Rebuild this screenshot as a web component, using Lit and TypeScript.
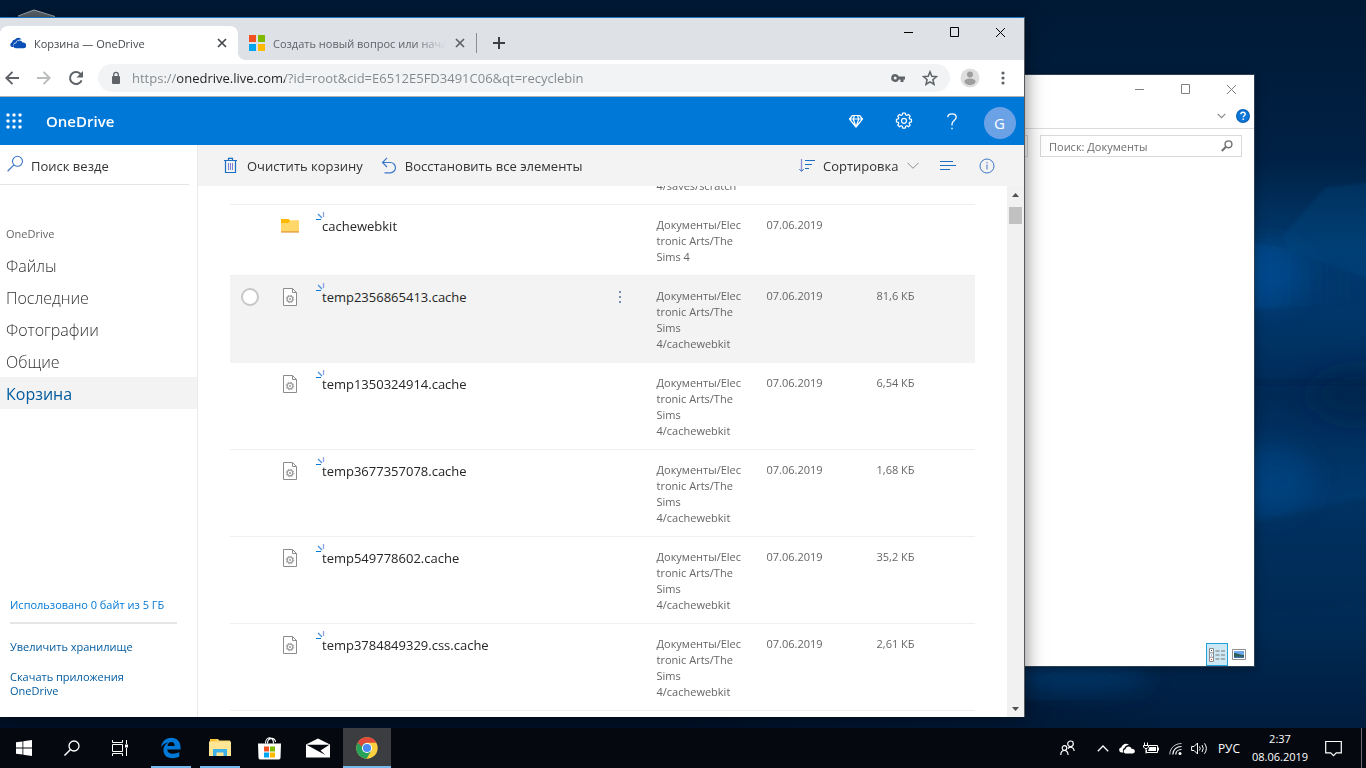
import { LitElement, html, svg, css, nothing } from "lit";
import { customElement } from "lit/decorators.js";
import { classMap } from "lit/directives/class-map.js";

const base = css`
  * { box-sizing: border-box; }
  button {
    font: inherit; color: inherit; background: none; border: 0; padding: 0; margin: 0;
    display: flex; align-items: center; justify-content: center;
  }
  input { font: inherit; margin: 0; padding: 0; border: 0; outline: 0; background: none; min-width: 0; }
  a { text-decoration: none; color: inherit; }
  svg { display: block; flex: none; }
  h1, h2, p, ul { margin: 0; padding: 0; font: inherit; list-style: none; }
`;

const icons = {
  minimize: html`<svg width="11" height="11" viewBox="0 0 11 11"><path d="M1 5.5h9" stroke="currentColor" fill="none"/></svg>`,
  maximize: html`<svg width="11" height="11" viewBox="0 0 11 11"><path d="M1.5.5h8v9h-8z" stroke="currentColor" fill="none"/></svg>`,
  close: html`<svg width="11" height="11" viewBox="0 0 11 11"><path d="M1 1l9 9M10 1l-9 9" stroke="currentColor" fill="none"/></svg>`,
};

/* ---------- Window caption buttons ---------- */
@customElement("caption-buttons")
class CaptionButtons extends LitElement {
  static styles = [base, css`
    :host { display: flex; height: 29px; }
    button { width: 46px; height: 29px; }
  `];
  render() {
    return html`
      <button aria-label="Свернуть">${icons.minimize}</button>
      <button aria-label="Развернуть">${icons.maximize}</button>
      <button aria-label="Закрыть">${icons.close}</button>`;
  }
}

/* ---------- Browser tabs and toolbar ---------- */
@customElement("browser-chrome")
class BrowserChrome extends LitElement {
  static styles = [base, css`
    :host { display: block; flex: none; color: #5f6368; }
    .strip { display: flex; height: 42px; background: #dee1e6; align-items: flex-start; }
    .tabs { display: flex; flex: 1; min-width: 0; padding-top: 8px; }
    .tab {
      display: flex; align-items: center; width: 238px; height: 34px;
      padding: 0 8px 0 10px; color: #5f6368; position: relative; font-size: 11px;
    }
    .tab.active { background: #fff; border-radius: 8px 8px 0 0; color: #45494d; }
    .tab.active::after {
      content: ""; position: absolute; left: 100%; bottom: 0; width: 8px; height: 8px;
      background: radial-gradient(circle at 100% 0, transparent 8px, #fff 8px);
    }
    .tab.rest { border: 0; padding-left: 11px; }
    .title {
      flex: 1; margin-left: 8px; overflow: hidden; white-space: nowrap;
    }
    .rest .title { mask-image: linear-gradient(to right, #000 82%, transparent 100%); }
    .x { width: 16px; height: 16px; }
    .rest .x { margin-left: 6px; }
    .sep { width: 1px; height: 20px; background: #8a8d92; margin-top: 7px; }
    .plus { width: 28px; height: 34px; margin-left: 8px; color: #3c4043; }
    caption-buttons { color: #000; }
    .bar {
      display: flex; align-items: center; height: 37px; background: #fff;
      border-bottom: 1px solid #b1b1b3;
    }
    .nav { display: flex; margin-left: -4px; }
    .nav button { width: 32px; height: 32px; }
    .dim { color: #babcbe; }
    .omni {
      flex: 1; display: flex; align-items: center; height: 28px; margin-left: 6px;
      background: #f1f3f4; border-radius: 14px; padding: 0 4px 0 10px;
    }
    .omni input {
      flex: 1; height: 28px; margin-left: 8px; font-size: 13px;
      background-image: linear-gradient(to right, #80868b 45px, #202124 45px, #202124 153px, #80868b 153px);
      -webkit-background-clip: text; background-clip: text; color: transparent;
    }
    .omni button { width: 32px; height: 28px; }
    .profile { width: 40px; height: 32px; }
    .menu { width: 26px; height: 32px; margin-right: 8px; }
  `];
  render() {
    const x = html`<svg width="16" height="16" viewBox="0 0 16 16"><path d="M4 4l8 8M12 4l-8 8" stroke="currentColor" stroke-width="1.7"/></svg>`;
    return html`
      <div class="strip">
        <div class="tabs" role="tablist">
          <div class="tab active" role="tab">
            <svg width="16" height="16" viewBox="0 0 16 16">
              <path d="M1.8 12A2.6 2.6 0 0 1 2 7.200A3.400 3.400 0 0 1 5 4.400A4 4 0 0 1 11.600 4.500C8.500 4 6.500 5.500 5.800 7.400C3.600 7.600 2.800 10 4 12z" fill="#0a4fb5"/>
              <path d="M6 13.300A2.500 2.500 0 0 1 6 8.300A3.500 3.500 0 0 1 12.600 7.600A2.900 2.900 0 0 1 14 13.300z" fill="#0a4fb5"/>
            </svg>
            <span class="title">Корзина — OneDrive</span>
            <button class="x" aria-label="Закрыть вкладку">${x}</button>
          </div>
          <div class="tab rest" role="tab">
            <svg width="16" height="16" viewBox="0 0 16 16">
              <path fill="#f25022" d="M0 0h7v7H0z"/><path fill="#7fba00" d="M9 0h7v7H9z"/>
              <path fill="#00a4ef" d="M0 9h7v7H0z"/><path fill="#ffb900" d="M9 9h7v7H9z"/>
            </svg>
            <span class="title">Создать новый вопрос или нача</span>
            <button class="x" aria-label="Закрыть вкладку">${x}</button>
          </div>
          <span class="sep"></span>
          <button class="plus" aria-label="Новая вкладка">
            <svg width="14" height="14" viewBox="0 0 14 14"><path d="M7 1v12M1 7h12" stroke="currentColor" stroke-width="2"/></svg>
          </button>
        </div>
        <caption-buttons></caption-buttons>
      </div>
      <div class="bar">
        <div class="nav">
          <button aria-label="Назад"><svg width="16" height="16" viewBox="0 0 16 16"><path d="M15 8H2.500M8.500 1.800L2.300 8l6.200 6.200" stroke="currentColor" stroke-width="1.900" fill="none"/></svg></button>
          <button class="dim" aria-label="Вперед"><svg width="16" height="16" viewBox="0 0 16 16"><path d="M1 8h12.500M7.500 1.800L13.700 8l-6.200 6.200" stroke="currentColor" stroke-width="1.900" fill="none"/></svg></button>
          <button aria-label="Обновить"><svg width="16" height="16" viewBox="0 0 16 16"><path d="M13.600 10.300A6 6 0 1 1 12.300 3.800L14 5.500" stroke="currentColor" stroke-width="2" fill="none"/><path d="M15 1v6.500H8.500z" fill="currentColor"/></svg></button>
        </div>
        <div class="omni">
          <svg width="16" height="16" viewBox="0 0 16 16"><path d="M5 6h6a1 1 0 0 1 1 1v6a1 1 0 0 1-1 1H5a1 1 0 0 1-1-1V7a1 1 0 0 1 1-1z" fill="#5f6368"/><path d="M5.700 7V4.600a2.300 2.300 0 0 1 4.600 0V7" stroke="#5f6368" stroke-width="1.300" fill="none"/></svg>
          <input aria-label="Адрес" .value=${"https://onedrive.live.com/?id=root&cid=E6512E5FD3491C06&qt=recyclebin"} />
          <button aria-label="Пароли"><svg width="14" height="14" viewBox="0 0 14 14"><path fill-rule="evenodd" fill="currentColor" d="M4.200 3a4 4 0 1 0 3.700 5.500H9.500V11h3V8.500H14v-3H7.900A4 4 0 0 0 4.200 3zm0 2.500a1.500 1.500 0 1 1 0 3a1.500 1.500 0 0 1 0-3z"/></svg></button>
          <button aria-label="Добавить закладку"><svg width="16" height="16" viewBox="0 0 16 16"><path d="M8 1.800l1.800 4.400 4.700.4-3.600 3.100 1.100 4.600L8 11.800l-4 2.500 1.100-4.600L1.500 6.600l4.700-.4z" stroke="currentColor" stroke-width="1.500" fill="none"/></svg></button>
        </div>
        <button class="profile" aria-label="Профиль"><svg width="20" height="20" viewBox="0 0 20 20"><circle cx="10" cy="10" r="9.500" fill="#dedede"/><circle cx="10" cy="6.500" r="3" fill="#9e9e9e"/><path d="M4.500 13.500c0-2 3-3 5.500-3s5.500 1 5.500 3c0 2-3 3.500-5.500 3.500s-5.500-1.500-5.500-3.500z" fill="#9e9e9e"/></svg></button>
        <button class="menu" aria-label="Меню"><svg width="4" height="14" viewBox="0 0 4 14"><g fill="currentColor"><circle cx="2" cy="2" r="1.600"/><circle cx="2" cy="7" r="1.600"/><circle cx="2" cy="12" r="1.600"/></g></svg></button>
      </div>`;
  }
}

/* ---------- File table ---------- */
interface Item { name: string; path: string; date: string; size: string; kind: "folder" | "file"; hovered?: boolean; }

const cachePath = "Документы/Electronic Arts/The Sims 4/cachewebkit";
const items: Item[] = [
  { name: "cachewebkit", path: "Документы/Electronic Arts/The Sims 4", date: "07.06.2019", size: "", kind: "folder" },
  { name: "temp2356865413.cache", path: cachePath, date: "07.06.2019", size: "81,6 КБ", kind: "file", hovered: true },
  { name: "temp1350324914.cache", path: cachePath, date: "07.06.2019", size: "6,54 КБ", kind: "file" },
  { name: "temp3677357078.cache", path: cachePath, date: "07.06.2019", size: "1,68 КБ", kind: "file" },
  { name: "temp549778602.cache", path: cachePath, date: "07.06.2019", size: "35,2 КБ", kind: "file" },
  { name: "temp3784849329.css.cache", path: cachePath, date: "07.06.2019", size: "2,61 КБ", kind: "file" },
];

@customElement("file-list")
class FileList extends LitElement {
  static styles = [base, css`
    :host { display: flex; flex: 1; min-height: 0; background: #fff; }
    .view { flex: 1; min-width: 0; overflow: hidden; padding: 0 32px 24px; }
    table { width: 100%; table-layout: fixed; border-collapse: collapse; font-size: 11px; line-height: 16px; color: #666; }
    td { vertical-align: top; padding: 12px 0 10px; border-bottom: 1px solid #efefef; text-align: left; }
    tr.lead td { padding-top: 0; }
    tr.hovered td { background: #f3f3f3; border-bottom-color: #f3f3f3; }
    .check, .icon, .more { width: 40px; }
    .path, .date { width: 110px; }
    .size { width: 115px; }
    td.path { padding-left: 17px; padding-right: 8px; overflow-wrap: anywhere; }
    td.date, td.size { padding-left: 17px; }
    td.name { padding: 11px 0 10px 12px; font-size: 13px; line-height: 20px; color: #262626; position: relative; }
    td.name svg { position: absolute; left: 6px; top: 7px; }
    td svg, td input { margin: 0 auto; }
    input {
      appearance: none; display: block; width: 18px; height: 18px; border-radius: 50%;
      border: 2px solid #c8c8c8; background: #fff;
    }
    .more button { width: 40px; height: 18px; color: #0078d7; }
    .scroll { width: 17px; background: #f1f1f1; display: flex; flex-direction: column; align-items: center; }
    .scroll button { width: 17px; height: 17px; color: #505050; }
    .track { flex: 1; width: 13px; padding-top: 4px; }
    .thumb { height: 17px; background: #c1c1c1; }
  `];
  firstUpdated() {
    this.renderRoot.querySelector(".view")!.scrollTop = 8;
  }
  private glyph(kind: string) {
    return kind === "folder"
      ? html`<svg width="18" height="18" viewBox="0 0 18 18"><path d="M0 2h7.500l1.200 1.200H18V15H0z" fill="#ffd869"/><path d="M0 2h7.500l1.500 1.500L7.500 6H0z" fill="#ffb900"/><path d="M0 14.500h18v1H0z" fill="#d9831f"/></svg>`
      : html`<svg width="18" height="18" viewBox="0 0 18 18"><path d="M2.500.5h9l4 4v13h-13z" fill="#fff" stroke="#8c8c8c"/><path d="M11.500.5v4h4" fill="none" stroke="#8c8c8c"/><g fill="none" stroke="#a0a0a0"><circle cx="9" cy="11" r="2.800" stroke-width="1.300"/><circle cx="9" cy="11" r="3.800" stroke-dasharray="1.500 1.480"/></g><circle cx="9" cy="11" r=".9" fill="#8c8c8c"/></svg>`;
  }
  render() {
    return html`
      <div class="view">
        <table aria-label="Корзина">
          <colgroup><col class="check"><col class="icon"><col><col class="more"><col class="path"><col class="date"><col class="size"></colgroup>
          <tbody>
            <tr class="lead"><td></td><td></td><td></td><td></td><td class="path">4/saves/scratch</td><td></td><td></td></tr>
            ${items.map(i => html`
              <tr class=${classMap({ hovered: !!i.hovered })}>
                <td>${i.hovered ? html`<input type="checkbox" aria-label=${i.name}>` : nothing}</td>
                <td>${this.glyph(i.kind)}</td>
                <td class="name"><svg width="9" height="9" viewBox="0 0 9 9"><path d="M0 7.500h5" stroke="#0078d7"/><path d="M2 2l4 4" stroke="#4b93dc" stroke-width="1.200"/><path d="M7.500 0v5" stroke="#8fa0e4" stroke-width="1.300"/></svg><a href="#">${i.name}</a></td>
                <td class="more">${i.hovered ? html`<button aria-label="Действия"><svg width="2" height="14" viewBox="0 0 2 14"><path d="M0 1h2v2H0zM0 6h2v2H0zM0 11h2v2H0z" fill="#7a8fae"/></svg></button>` : nothing}</td>
                <td class="path">${i.path}</td>
                <td class="date">${i.date}</td>
                <td class="size">${i.size}</td>
              </tr>`)}
          </tbody>
        </table>
      </div>
      <div class="scroll">
        <button aria-label="Вверх"><svg width="7" height="4" viewBox="0 0 7 4"><path d="M0 4L3.500 0 7 4z" fill="currentColor"/></svg></button>
        <div class="track"><div class="thumb"></div></div>
        <button aria-label="Вниз"><svg width="7" height="4" viewBox="0 0 7 4"><path d="M0 0l3.500 4L7 0z" fill="currentColor"/></svg></button>
      </div>`;
  }
}

/* ---------- OneDrive page ---------- */
@customElement("onedrive-page")
class OnedrivePage extends LitElement {
  static styles = [base, css`
    :host { display: flex; flex-direction: column; flex: 1; min-height: 0; background: #fff; color: #333; }
    header { display: flex; align-items: center; height: 48px; background: #0078d7; color: #fff; flex: none; }
    .waffle { width: 28px; height: 48px; }
    h1 { flex: 1; padding-left: 18px; font-size: 15px; font-weight: 600; }
    header .act { width: 48px; height: 48px; }
    .avatar { width: 32px; height: 32px; border-radius: 50%; background: #6ba2e6; font-size: 15px; margin: 4px 8px 0; }
    .body { display: flex; flex: 1; min-height: 0; }
    aside { width: 198px; border-right: 1px solid #eaeaea; display: flex; flex-direction: column; flex: none; }
    .search { display: flex; align-items: center; height: 40px; margin-right: 8px; padding: 2px 0 0 7px; border-bottom: 1px solid #e4e4e4; }
    .search svg { margin-top: -4px; }
    .search input { flex: 1; margin-left: 7px; font-size: 13px; height: 24px; }
    .search input::placeholder { color: #333; opacity: 1; }
    h2 { font-size: 11px; color: #666; padding: 41px 6px 0; line-height: 16px; }
    nav { padding-top: 7px; }
    nav a { display: block; padding: 1px 6px 0; height: 32px; line-height: 32px; font-size: 16px; font-weight: 300; color: #333; }
    nav a.on { background: #f3f3f3; color: #005a9e; font-weight: 400; }
    footer { margin-top: auto; padding: 0 20px 19px 10px; font-size: 11px; line-height: 14px; color: #005a9e; }
    .quota { color: #0078d7; white-space: nowrap; }
    .meter { height: 2px; background: #e5e5e5; margin: 10px 0 16px; }
    footer a { display: block; }
    .more { margin-top: 16px; padding-right: 40px; }
    main { flex: 1; min-width: 0; display: flex; flex-direction: column; }
    .cmd { display: flex; align-items: center; height: 41px; background: #f3f3f3; font-size: 13px; padding: 0 29px 0 25px; flex: none; }
    .cmd button { height: 41px; gap: 8px; }
    .cmd .next { margin-left: 18px; }
    .grow { flex: 1; }
    .lines { margin-left: 21px; }
    .info { margin-left: 23px; }
  `];
  render() {
    return html`
      <header>
        <button class="waffle" aria-label="Приложения"><svg width="16" height="16" viewBox="0 0 16 16" fill="#fff">${[2, 8, 14].map(y => [2, 8, 14].map(x => svg`<rect x=${x - 1.5} y=${y - 1.5} width="3" height="3" rx=".8"/>`))}</svg></button>
        <h1>OneDrive</h1>
        <button class="act" aria-label="Премиум"><svg width="14" height="14" viewBox="0 0 14 14"><path d="M3.500 1.500h7l3 3.500L7 13 .5 5zM.5 5h13M4.300 5L7 13l2.700-8M4.300 5L5.500 1.500M9.700 5L8.500 1.500" fill="none" stroke="#fff" stroke-width="1.200" stroke-linejoin="round"/></svg></button>
        <button class="act" aria-label="Параметры"><svg width="18" height="18" viewBox="0 0 18 18"><path d="M7.600 1.500h2.800l.4 2 1.200.5 1.700-1.100 1.900 1.900-1.100 1.700.5 1.200 2 .4v2.800l-2 .4-.5 1.200 1.100 1.700-1.900 1.900-1.700-1.100-1.200.5-.4 2H7.600l-.4-2-1.200-.5-1.700 1.100-1.900-1.900 1.100-1.700-.5-1.200-2-.4V8.100l2-.4.5-1.200-1.100-1.700 1.900-1.900L6 4l1.200-.5z" transform="translate(.5 -.3) scale(.94)" fill="none" stroke="#fff" stroke-width="1.300" stroke-linejoin="round"/><circle cx="9" cy="8.800" r="2.500" fill="none" stroke="#fff" stroke-width="1.200"/></svg></button>
        <button class="act" aria-label="Справка"><svg width="10" height="17" viewBox="0 0 10 17"><path d="M.8 4.200C.8 2 2.500.8 5 .8s4.200 1.300 4.200 3.500C9.200 7.500 5 7.500 5 11v1.500" fill="none" stroke="#fff" stroke-width="1.300"/><path d="M4.300 14.800h1.400v1.500H4.300z" fill="#fff"/></svg></button>
        <button class="avatar">G</button>
      </header>
      <div class="body">
        <aside>
          <label class="search">
            <svg width="17" height="17" viewBox="0 0 17 17"><circle cx="10.500" cy="6.300" r="5" fill="none" stroke="#3c78c8" stroke-width="1.100"/><path d="M7 9.900L.6 16.200" stroke="#3c78c8" stroke-width="1.200"/></svg>
            <input type="text" aria-label="Поиск" placeholder="Поиск везде">
          </label>
          <h2>OneDrive</h2>
          <nav>
            ${["Файлы", "Последние", "Фотографии", "Общие", "Корзина"].map(t => html`<a href="#" class=${classMap({ on: t === "Корзина" })}>${t}</a>`)}
          </nav>
          <footer>
            <a class="quota" href="#">Использовано 0 байт из 5 ГБ</a>
            <div class="meter"></div>
            <a href="#">Увеличить хранилище</a>
            <a class="more" href="#">Скачать приложения OneDrive</a>
          </footer>
        </aside>
        <main>
          <div class="cmd">
            <button><svg width="16" height="17" viewBox="0 0 16 17"><path d="M1 3.500h13M5.500 3V1.300h4V3M2.500 3.500v12h10v-12" fill="none" stroke="#1b6ec2" stroke-width="1.200"/><path d="M5.500 6v7M7.500 6v7M9.500 6v7" stroke="#7b7fd0"/></svg>Очистить корзину</button>
            <button class="next"><svg width="16" height="17" viewBox="0 0 16 17"><path d="M6 .8L1.500 5.500 6 10M1.500 5.500h7.800a5 5 0 0 1 0 10.300H3.500" fill="none" stroke="#3c78c8" stroke-width="1.200"/></svg>Восстановить все элементы</button>
            <span class="grow"></span>
            <button><svg width="16" height="15" viewBox="0 0 16 15"><path d="M2.500 1v12" stroke="#8a8fd8" stroke-width="1.300"/><path d="M.3 11l2.200 2.500L4.700 11" fill="none" stroke="#3c78c8"/><path d="M6 2.500h10M6 6.500h7M6 10.500h4" stroke="#1b6ec2"/></svg>Сортировка<svg width="12" height="7" viewBox="0 0 12 7"><path d="M.5.8L6 6.300 11.500.8" fill="none" stroke="#8a8a8a"/></svg></button>
            <button class="lines" aria-label="Вид"><svg width="16" height="11" viewBox="0 0 16 11"><path d="M0 1.500h13M0 5.500h16M0 9.500h10" stroke="#1b6ec2"/></svg></button>
            <button class="info" aria-label="Сведения"><svg width="16" height="16" viewBox="0 0 16 16"><circle cx="8" cy="8" r="7" fill="none" stroke="#3c78c8"/><path d="M8 6.500v5M8 4v1.400" stroke="#3c78c8"/></svg></button>
          </div>
          <file-list></file-list>
        </main>
      </div>`;
  }
}

/* ---------- Explorer window behind the browser ---------- */
@customElement("explorer-window")
class ExplorerWindow extends LitElement {
  static styles = [base, css`
    :host { display: flex; flex-direction: column; background: #fff; border: 1px solid #2b3f55; color: #808080; }
    .end { display: flex; justify-content: flex-end; align-items: center; }
    .ribbon { height: 25px; border-bottom: 1px solid #dadbdc; padding-right: 4px; gap: 10px; }
    .ribbon button { height: 16px; }
    .address { padding: 6px 12px 0 0; gap: 12px; }
    .crumbs { flex: 1; height: 22px; border: 1px solid #d9d9d9; }
    .find { width: 202px; height: 22px; display: flex; align-items: center; border: 1px solid #d9d9d9; padding: 0 8px; font-size: 11px; }
    .find input { flex: 1; }
    .find input::placeholder { color: #6d6d6d; opacity: 1; }
    .status { margin-top: auto; padding: 0 7px 0 0; gap: 3px; }
    .view { width: 22px; height: 23px; }
    .view.on { background: #cce8f4; border: 1px solid #26a0da; }
    .view.pic { width: 16px; }
  `];
  render() {
    return html`
      <div class="end"><caption-buttons></caption-buttons></div>
      <div class="end ribbon">
        <button aria-label="Лента"><svg width="9" height="6" viewBox="0 0 9 6"><path d="M.7.800L4.500 4.600 8.300.8" fill="none" stroke="#8a8a8a" stroke-width="1.200"/></svg></button>
        <button aria-label="Справка"><svg width="14" height="14" viewBox="0 0 14 14"><circle cx="7" cy="7" r="7" fill="#0a63b8"/><circle cx="7" cy="7" r="5.800" fill="#0b77d8"/><path d="M4.900 5.300c0-1.300.9-2 2.100-2s2.200.7 2.200 1.900c0 1.500-2 1.500-2 3M7.200 9.600v1.500" fill="none" stroke="#fff" stroke-width="1.400"/></svg></button>
      </div>
      <div class="end address">
        <div class="crumbs"></div>
        <label class="find"><input type="text" aria-label="Поиск в папке" placeholder="Поиск: Документы">
          <svg width="12" height="12" viewBox="0 0 12 12"><circle cx="7.500" cy="4.300" r="3.400" fill="none" stroke="#707070" stroke-width="1.400"/><path d="M5 6.800L.8 11" stroke="#707070" stroke-width="2"/></svg></label>
      </div>
      <div class="end status">
        <button class="view on" aria-label="Таблица"><svg width="17" height="14" viewBox="0 0 17 14"><path d="M.5.5h4v13h-4zM.5 4.800h4M.5 9.200h4" fill="#fff" stroke="#8a8a8a"/><path d="M2 2h1v1H2z" fill="#444"/><path d="M2 6.500h1v1H2z" fill="#2b7de0"/><path d="M2 11h1v1H2z" fill="#d22"/><path d="M6.500 3h4M12 3h4M6.500 7h4M12 7h4M6.500 11h4M12 11h4" stroke="#777"/></svg></button>
        <button class="view pic" aria-label="Крупные значки"><svg width="14" height="11" viewBox="0 0 14 11"><path d="M.5.5h13v10H.5z" fill="#fff" stroke="#8f8f8f"/><path d="M2 2h10v4H2z" fill="#6aa7ee"/><path d="M2 4c3 0 6 2 10 2v3H2z" fill="#2c5f56"/><path d="M2 7.500h10V9H2z" fill="#3d6fa5"/></svg></button>
      </div>`;
  }
}

/* ---------- Taskbar ---------- */
@customElement("task-bar")
class TaskBar extends LitElement {
  static styles = [base, css`
    :host { display: flex; height: 40px; flex: none; background: #05080f; color: #fff; font-size: 11px; }
    .app { width: 48px; height: 40px; position: relative; }
    .pins { display: flex; gap: 1px; margin-left: 3px; }
    .run::after { content: ""; position: absolute; left: 4px; right: 4px; bottom: 0; height: 2px; background: #76b9ed; }
    .on { background: #3b3d41; }
    .on::after { left: 0; right: 0; }
    .tray { margin-left: auto; display: flex; align-items: center; }
    .tray button { width: 24px; height: 40px; }
    .tray .people { width: 48px; }
    .tray .lang { width: 36px; font-size: 12px; }
    .tray .clock { width: 66px; flex-direction: column; line-height: 18px; }
    .tray .note { width: 40px; margin-right: 8px; }
    .peek { width: 5px; height: 40px; border-left: 1px solid #6b6e74; }
  `];
  render() {
    return html`
      <button class="app" aria-label="Пуск"><svg width="16" height="16" viewBox="0 0 16 16" fill="#fff"><path d="M0 2.300L6.500 1.400v6.200H0zM7.300 1.300L16 0v7.600H7.300zM0 8.400h6.500v6.200L0 13.700zM7.300 8.400H16V16l-8.700-1.300z"/></svg></button>
      <button class="app" aria-label="Поиск"><svg width="16" height="16" viewBox="0 0 16 16"><circle cx="10" cy="6" r="5" fill="none" stroke="#fff" stroke-width="1.300"/><path d="M6.500 9.600L.5 15.600" stroke="#fff" stroke-width="1.400"/></svg></button>
      <button class="app" aria-label="Представление задач"><svg width="16" height="16" viewBox="0 0 16 16" fill="none" stroke="#fff"><path d="M.5 4.500h10v7H.5zM.5 0v2.500h10V0M.5 16v-2.500h10V16M14.500 0v4M14.500 8v8"/><path d="M13 4.500h3v3h-3z" fill="#fff" stroke="none"/></svg></button>
      <div class="pins">
        <button class="app run" aria-label="Edge"><svg width="22" height="22" viewBox="0 0 22 22"><path d="M1 10.500C1.800 4.500 5.800.8 11.300.8c5.800 0 9.200 4 9.200 9v2.700H7.300c.2 3 2.700 4.300 5.700 4.300 2.300 0 4.600-.6 6.300-1.700v4.500c-2 1.200-4.300 1.700-6.900 1.700-5.700 0-9-3.300-9-8.200 0-3.400 1.900-6.200 5-7.600C5 6 2.500 7.500 1 10.500zm6.500-1.500h7.200c0-2.600-1.300-3.900-3.400-3.900-2.100 0-3.500 1.500-3.800 3.900z" fill="#0078d7"/></svg></button>
        <button class="app run" aria-label="Проводник"><svg width="22" height="20" viewBox="0 0 22 20"><path d="M1 1h8l1.500 1.500H21V18H1z" fill="#f5cf63"/><path d="M0 3.500h22V18H0z" fill="#ffe694"/><path d="M4 18v-7h14v7h-3.500v-3.500h-7V18z" fill="#3fb3e8"/><path d="M1.500 1.500h5v1.200h-5z" fill="#ffb400"/></svg></button>
        <button class="app" aria-label="Магазин"><svg width="23" height="23" viewBox="0 0 23 23"><path d="M0 6.500h23l-.5 14.500a2 2 0 0 1-2 1.500h-18A2 2 0 0 1 .5 21z" fill="#fff"/><path d="M7.500 6.500c0-7.500 8-7.500 8 0M9.500 6.500c0-6.500 8-6.500 8-1.500" fill="none" stroke="#fff" stroke-width="1.100"/><path d="M6 9.500h5v5H6z" fill="#f25022"/><path d="M12 9.500h5v5h-5z" fill="#7fba00"/><path d="M6 15.500h5v5H6z" fill="#00a4ef"/><path d="M12 15.500h5v5h-5z" fill="#ffb900"/></svg></button>
        <button class="app" aria-label="Почта"><svg width="24" height="20" viewBox="0 0 24 20"><path d="M0 6.500L12 .5l12 6V19.500H0z" fill="#fff"/><path d="M.5 6.800h23L14.500 12.500l5 4.500-9-4.700z" fill="#05080f"/></svg></button>
        <button class="app run on" aria-label="Chrome"><svg width="22" height="22" viewBox="0 0 22 22"><circle cx="11" cy="11" r="10.700" fill="#fdd03f"/><path d="M1.700 5.700A10.700 10.700 0 0 0 10.500 21.700L15.300 13.600 11 11V5.700z" fill="#27a25a"/><path d="M1.700 5.700A10.700 10.700 0 0 1 20.300 5.700H11A5.300 5.300 0 0 0 5.900 9.800z" fill="#e0493c"/><circle cx="11" cy="11" r="5.100" fill="#fff"/><circle cx="11" cy="11" r="4.100" fill="#4a8af4"/></svg></button>
      </div>
      <div class="tray">
        <button class="people" aria-label="Люди"><svg width="15" height="16" viewBox="0 0 15 16" fill="none" stroke="#fff" stroke-width="1.200"><circle cx="10.500" cy="3.800" r="2.800"/><circle cx="4.500" cy="8" r="2.300"/><path d="M.8 15c0-6 7-6 7.300 0M8 8.500c2.500-2.500 6-1 6.200 2.500"/></svg></button>
        <button aria-label="Скрытые значки"><svg width="12" height="7" viewBox="0 0 12 7"><path d="M.8 6.200L6 1l5.200 5.200" fill="none" stroke="#fff" stroke-width="1.300"/></svg></button>
        <button aria-label="OneDrive"><svg width="16" height="11" viewBox="0 0 16 11"><path d="M3 9.500C-.7 9-.6 5 2.400 4.600 3 1.500 7-.8 10 2 7.500 1.800 5.900 3.200 5.500 5 3.600 5.500 3.400 8 4.500 9.500z" fill="#fff"/><path d="M6.200 10.500c-2-.6-2-4 .3-4.200C7 3 11.700 2.600 12.500 5.700c4-.3 4.500 4.500 1 4.800z" fill="#fff"/></svg></button>
        <button aria-label="Батарея"><svg width="17" height="13" viewBox="0 0 17 13" fill="none" stroke="#fff"><path d="M6 3.500h8.500v7H3.500V8"/><path d="M15.500 5.500v3"/><path d="M6.500 5h6.500v4H5z" fill="#fff" stroke="none"/><path d="M1.500.5v3M4.500.5v3M.5 3.500h5v1.500L4 6.500H2L.5 5zM3 6.500v5" /></svg></button>
        <button aria-label="Wi-Fi"><svg width="13" height="13" viewBox="0 0 13 13" fill="none" stroke="#fff"><path d="M.8 12.500C.8 6 6 1.500 12.500 1.500" opacity=".75"/><path d="M3.800 12.500c0-5 4-8 8.700-8M6.800 12.500c0-3 2.500-5 5.700-5" stroke-width="1.200"/><circle cx="11" cy="11.500" r="1.500" fill="#fff" stroke="none"/></svg></button>
        <button aria-label="Громкость"><svg width="17" height="13" viewBox="0 0 17 13" fill="none" stroke="#fff"><path d="M.6 4.500h2.500L6.500 1v11L3.100 8.500H.6z"/><path d="M8.500 4.500q1.500 2 0 4M11 3q2.500 3.500 0 7M13.500 1.300q3.700 5.200 0 10.400"/></svg></button>
        <button class="lang">РУС</button>
        <button class="clock"><span>2:37</span><span>08.06.2019</span></button>
        <button class="note" aria-label="Уведомления"><svg width="17" height="17" viewBox="0 0 17 17"><path d="M.7 1.500h15.600v11.300h-5L8.500 15.600 5.700 12.800h-5z" fill="none" stroke="#fff" stroke-width="1.200"/></svg></button>
        <span class="peek"></span>
      </div>`;
  }
}

/* ---------- Desktop ---------- */
@customElement("app-root")
class AppRoot extends LitElement {
  static styles = [base, css`
    :host {
      display: flex; flex-direction: column; height: 100vh; overflow: hidden; background: #001a38;
      font-family: "Open Sans", "Noto Sans", sans-serif; font-size: 13px;
    }
    .desktop { flex: 1; min-height: 0; position: relative; overflow: hidden; }
    .wall { position: absolute; inset: 0; width: 100%; height: 100%; }
    .bin { position: absolute; left: 18px; top: 9px; }
    .browser {
      position: absolute; left: 0; top: 17px; bottom: 11px; width: 75%;
      display: flex; flex-direction: column; border-top: 1px solid #1b78c8; border-right: 1px solid #565a5e;
      box-shadow: 0 2px 18px rgba(0, 0, 0, .5);
    }
    explorer-window { position: absolute; left: 60%; right: 111px; top: 74px; bottom: 61px; box-shadow: 0 2px 10px rgba(0, 0, 0, .35); }
  `];
  render() {
    return html`
      <div class="desktop">
        <svg class="wall" viewBox="0 0 1366 728" preserveAspectRatio="none">
          <defs>
            <linearGradient id="sky" x2="0" y2="1">
              <stop offset="0" stop-color="#001935"/><stop offset=".22" stop-color="#002145"/><stop offset=".34" stop-color="#003a6e"/>
              <stop offset=".45" stop-color="#003568"/><stop offset=".54" stop-color="#002a56"/><stop offset=".68" stop-color="#00386c"/><stop offset=".86" stop-color="#002a54"/><stop offset="1" stop-color="#001d3e"/>
            </linearGradient>
            <linearGradient id="beam" gradientUnits="userSpaceOnUse" x1="1250" x2="1366" y1="0" y2="0"><stop offset="0" stop-color="#0054a0" stop-opacity=".6"/><stop offset="1" stop-color="#003a72" stop-opacity="0"/></linearGradient>
            <linearGradient id="left" x2="1"><stop offset=".5" stop-color="#001129"/><stop offset=".85" stop-color="#001129" stop-opacity="0"/></linearGradient>
            <filter id="soft" filterUnits="userSpaceOnUse" x="700" y="-60" width="760" height="860"><feGaussianBlur stdDeviation="12"/></filter>
            <filter id="fine" filterUnits="userSpaceOnUse" x="1200" y="100" width="260" height="600"><feGaussianBlur stdDeviation="1.500"/></filter>
          </defs>
          <rect width="1366" height="728" fill="url(#sky)"/>
          <g filter="url(#soft)">
            <ellipse cx="1360" cy="395" rx="50" ry="26" fill="#002246" opacity=".5"/>
            <ellipse cx="1265" cy="275" rx="40" ry="30" fill="#0054a0" opacity=".5"/>
            <ellipse cx="1270" cy="480" rx="45" ry="34" fill="#005098" opacity=".4"/>
            <ellipse cx="1080" cy="676" rx="70" ry="14" fill="#003f78" opacity=".6"/>
          </g>
          <g filter="url(#fine)">
            <path d="M1282 236L1326 187 1400 180V290L1290 250z" fill="#004a8a" opacity=".25"/>
            <path d="M1240 240L1400 272V300L1240 310z" fill="url(#beam)" opacity=".5"/>
            <path d="M1240 525L1400 491V600L1240 620z" fill="#00264e" opacity=".35"/>
            <path d="M1240 381H1400V384H1240z" fill="#001d40" opacity=".4"/>
          </g>
          <rect y="700" width="1366" height="28" fill="url(#left)"/>
        </svg>
        <svg class="bin" width="38" height="22" viewBox="0 0 38 22"><path d="M0 7L16 1 37 7.500 34 22H4z" fill="#5d6770"/><path d="M0 7L16 1 37 7.500" fill="none" stroke="#a9b0b6"/></svg>
        <explorer-window></explorer-window>
        <div class="browser">
          <browser-chrome></browser-chrome>
          <onedrive-page></onedrive-page>
        </div>
      </div>
      <task-bar></task-bar>`;
  }
}
